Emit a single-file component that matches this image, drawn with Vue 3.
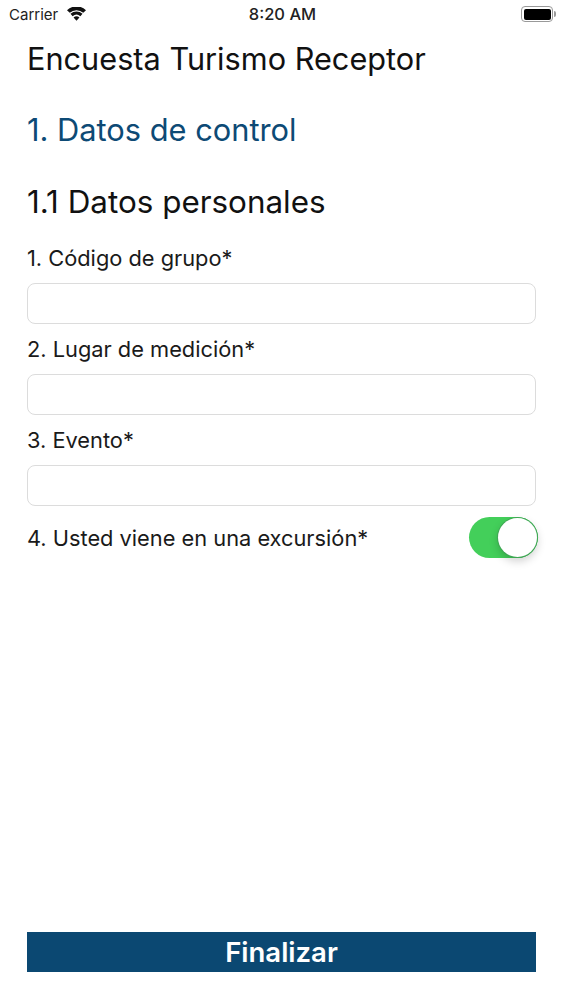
<script setup>
const fields = ['1. Código de grupo*', '2. Lugar de medición*', '3. Evento*']
</script>

<template>
  <div class="screen">
    <!-- iOS status bar -->
    <header class="status-bar">
      <div class="status-left">
        <span>Carrier</span>
        <svg class="wifi" viewBox="0 0 18 13" width="19" height="14">
          <path d="M9 13 L6.2 9.7 A4.4 4.4 0 0 1 11.8 9.7 Z" fill="#111" />
          <path d="M5.3 8.6 L3.3 6.3 A8.6 8.6 0 0 1 14.7 6.3 L12.7 8.6 A5.6 5.6 0 0 0 5.3 8.6 Z" fill="#111" />
          <path d="M2.6 5.4 L0 2.9 A13 13 0 0 1 18 2.9 L15.4 5.4 A9.6 9.6 0 0 0 2.6 5.4 Z" fill="#111" />
        </svg>
      </div>
      <span class="status-time">8:20 AM</span>
      <div class="battery">
        <div class="battery-body"><div class="battery-fill"></div></div>
        <div class="battery-cap"></div>
      </div>
    </header>

    <main class="content">
      <h1 class="title">Encuesta Turismo Receptor</h1>
      <h2 class="section">1. Datos de control</h2>
      <h3 class="subsection">1.1 Datos personales</h3>

      <div v-for="f in fields" :key="f" class="field">
        <label class="field-label">{{ f }}</label>
        <input class="field-input" type="text" />
      </div>

      <div class="toggle-row">
        <span class="field-label">4. Usted viene en una excursión*</span>
        <div class="toggle"><div class="knob"></div></div>
      </div>
    </main>

    <footer class="footer">
      <button class="finish" type="button">Finalizar</button>
    </footer>
  </div>
</template>

<style scoped>
.screen {
  height: 1000px;
  display: flex;
  flex-direction: column;
  background: #fff;
  color: #111;
  font-family: Inter, "Liberation Sans", sans-serif;
  overflow: hidden;
}

.status-bar {
  height: 30px;
  padding: 0 7px 2px 9px;
  box-sizing: border-box;
  display: grid;
  grid-template-columns: 1fr auto 1fr;
  align-items: center;
  font-size: 15px;
  color: #222;
}
.status-left {
  display: flex;
  align-items: center;
  gap: 9px;
}
.status-time {
  font-weight: 500;
  font-size: 16.5px;
}
.battery {
  justify-self: end;
  display: flex;
  align-items: center;
  gap: 1px;
}
.battery-body {
  width: 32px;
  height: 16px;
  box-sizing: border-box;
  border: 1.5px solid #999;
  border-radius: 4px;
  padding: 1.5px;
}
.battery-fill {
  height: 100%;
  background: #000;
  border-radius: 2px;
}
.battery-cap {
  width: 2px;
  height: 6px;
  background: #999;
  border-radius: 0 2px 2px 0;
}

.content {
  flex: 1;
  padding: 0 27px;
}
.title {
  margin: 9px 0 0;
  font-size: 30.7px;
  line-height: 40px;
  font-weight: 400;
}
.section {
  margin: 31px 0 0;
  font-size: 30.8px;
  line-height: 40px;
  font-weight: 400;
  color: #0d4a75;
}
.subsection {
  margin: 32px 0 0;
  font-size: 31.4px;
  line-height: 40px;
  font-weight: 400;
}

.field {
  display: flex;
  flex-direction: column;
}
.field-label {
  font-size: 21.8px;
  line-height: 28px;
  color: #1a1a1a;
}
.field-input {
  height: 41px;
  margin-top: 11px;
  box-sizing: border-box;
  border: 1px solid #dcdcdc;
  border-radius: 8px;
  background: #fff;
  outline: none;
}
.subsection + .field { margin-top: 22px; }
.field + .field { margin-top: 11px; }

.toggle-row {
  margin-top: 11px;
  display: flex;
  align-items: center;
  justify-content: space-between;
  margin-right: -2px;
}
.toggle {
  width: 69px;
  height: 41px;
  box-sizing: border-box;
  border-radius: 21px;
  background: #43cf5a;
  display: flex;
  align-items: center;
  justify-content: flex-end;
  padding-right: 1px;
}
.knob {
  width: 39px;
  height: 39px;
  border-radius: 50%;
  background: #fff;
  box-shadow: 0 0 0 1px #3fa654, 0 4px 10px rgba(0, 0, 0, 0.2);
}

.footer {
  padding: 0 27px 28px;
}
.finish {
  display: block;
  width: 100%;
  height: 40px;
  border: none;
  background: #0b4872;
  color: #fff;
  font-family: inherit;
  font-size: 27.5px;
  font-weight: 600;
}
</style>
